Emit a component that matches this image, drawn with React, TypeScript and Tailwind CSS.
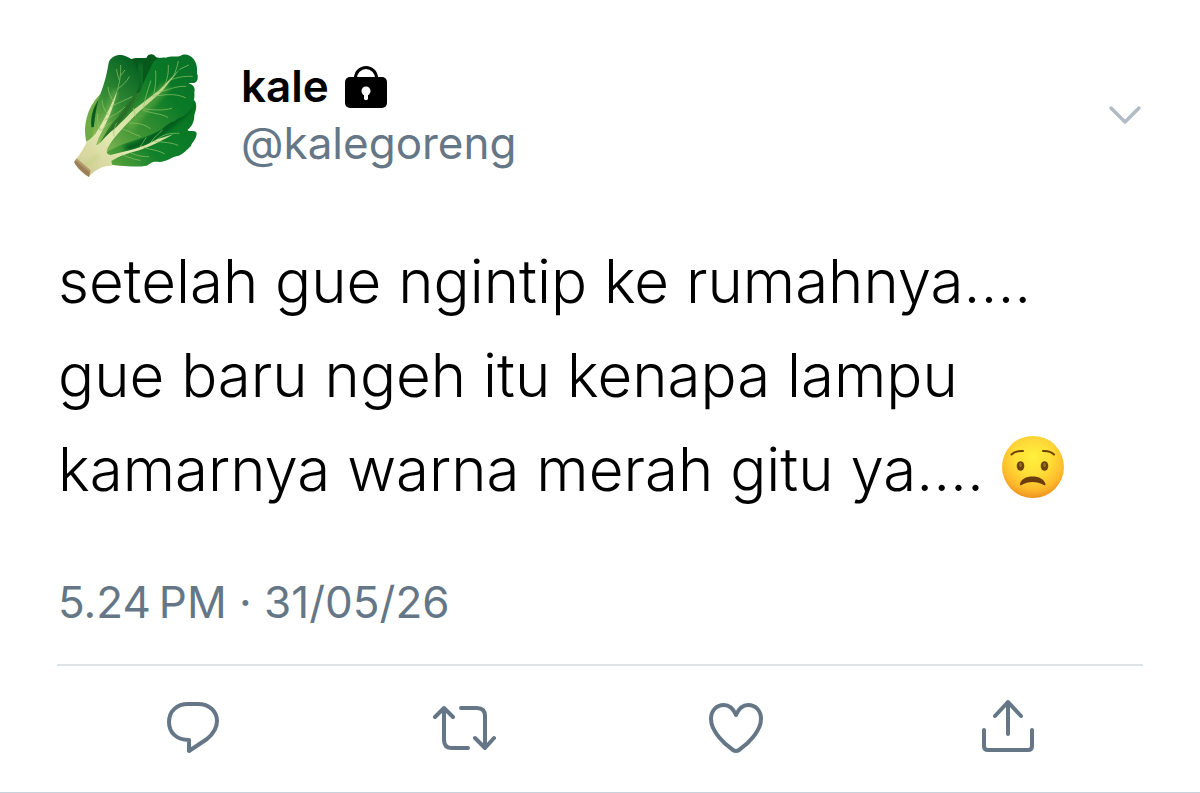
import React from "react";

export default function App() {
  return (
    <main className="bg-white border-b border-[#c8d2da] px-[57px] pt-10 font-['Inter',sans-serif]">
      <article>
        <header className="flex items-start">
          <KaleAvatar />
          <div className="ml-6 mt-[18px] flex-1">
            <div className="flex items-center gap-4">
              <h1 className="text-[44px] leading-[57px] font-semibold text-black">
                kale
              </h1>
              <LockIcon />
            </div>
            <p className="text-[44px] leading-[57px] text-[#657786]">
              @kalegoreng
            </p>
          </div>
          <button type="button" aria-label="More" className="mt-16">
            <svg
              className="w-9 h-6"
              viewBox="0 0 36 24"
              fill="none"
              stroke="#b2bbc3"
              strokeWidth="3.500"
              strokeLinecap="round"
              strokeLinejoin="round"
            >
              <path d="M4 4 L18 18 L32 4" />
            </svg>
          </button>
        </header>

        <p className="mt-11 pl-px text-[60px] leading-[94px] font-light text-black">
          setelah gue ngintip ke rumahnya....
          <br />
          gue baru ngeh itu kenapa lampu
          <br />
          kamarnya warna merah gitu ya.... <WorriedFace />
        </p>

        <p className="mt-14 pl-px text-[44px] leading-[60px] text-[#657786]">
          5.24{"\u202F"}PM · 31/05/26
        </p>
      </article>

      <div className="mt-8 grid grid-cols-4 border-t-2 border-[#e1e4e6] pt-[31px] pb-[31px]">
        <Action label="Reply">
          <path d="M27 7 H37 C48 7 56 14 56 24 C56 32 52 37 46 42 L28 54 V43 C16 43 8 36 8 25 C8 14 16 7 27 7 Z" />
        </Action>
        <Action label="Retweet">
          <path d="M3 20 L12 11 L21 20 M12 11 V43 Q12 51 20 51 H36 M29 11 H45 Q53 11 53 19 V51 M43 41 L53 51 L62 41" />
        </Action>
        <Action label="Like">
          <path d="M32 18 C29 11 25 8 20 8 C12 8 7 14 7 22 C7 34 20 47 29 53 Q32 55 35 53 C44 47 57 34 57 22 C57 14 52 8 44 8 C39 8 35 11 32 18 Z" />
        </Action>
        <Action label="Share">
          <path d="M33 37 V5 M20 19 L33 5 L46 19 M9 33 V49 Q9 53 13 53 H53 Q57 53 57 49 V33" />
        </Action>
      </div>
    </main>
  );
}

function Action({
  label,
  children,
}: {
  label: string;
  children: React.ReactNode;
}) {
  return (
    <button type="button" aria-label={label} className="flex justify-center">
      <svg
        className="w-16 h-16"
        viewBox="0 0 64 64"
        fill="none"
        stroke="#657786"
        strokeWidth="4"
        strokeLinecap="round"
        strokeLinejoin="round"
      >
        {children}
      </svg>
    </button>
  );
}

function LockIcon() {
  return (
    <svg className="w-[42px] h-[42px]" viewBox="0 0 42 42" aria-hidden="true">
      <path
        d="M10.500 15 V12 A10.500 10.500 0 0 1 31.500 12 V15"
        fill="none"
        stroke="#000"
        strokeWidth="3"
      />
      <rect y="11" width="42" height="31" rx="5" fill="#000" />
      <circle cx="21" cy="25" r="4.500" fill="#fff" />
      <path d="M19 26 H23 V33 Q21 35.500 19 33 Z" fill="#fff" />
    </svg>
  );
}

function WorriedFace() {
  return (
    <svg
      className="inline-block w-16 h-16 align-[-8px]"
      viewBox="0 0 64 64"
      role="img"
      aria-label="worried face"
    >
      <defs>
        <radialGradient id="face" cx="50%" cy="34%" r="66%">
          <stop offset="0" stopColor="#fff03c" />
          <stop offset="0.450" stopColor="#ffdd36" />
          <stop offset="0.800" stopColor="#fdb92b" />
          <stop offset="1" stopColor="#ee9220" />
        </radialGradient>
        <linearGradient id="shine" x1="0" y1="0" x2="0" y2="1">
          <stop offset="0" stopColor="#ffc83c" />
          <stop offset="1" stopColor="#ffe83a" stopOpacity="0" />
        </linearGradient>
      </defs>
      <circle cx="32" cy="32" r="31" fill="url(#face)" />
      <ellipse cx="32" cy="11" rx="22" ry="9" fill="url(#shine)" opacity="0.5" />
      <g fill="none" stroke="#6b4208" strokeWidth="2" strokeLinecap="round">
        <path d="M10.500 19.500 Q14.500 15.500 22 16" />
        <path d="M42 16 Q49 15.500 53 19.500" />
      </g>
      <g fill="#6b430d">
        <ellipse cx="19.500" cy="31" rx="3.800" ry="4.800" />
        <ellipse cx="43.500" cy="31" rx="3.800" ry="4.800" />
      </g>
      <g fill="#94651f">
        <ellipse cx="19.500" cy="30" rx="1.700" ry="2.200" />
        <ellipse cx="43.500" cy="30" rx="1.700" ry="2.200" />
      </g>
      <path
        d="M19 49 C20 44 25 41.500 31.500 41.500 C38 41.500 43 44 44.500 49 C44.800 50.500 43.500 50.600 42.800 50 C36 46 27 46 20.500 50 C19.600 50.600 18.700 50.300 19 49 Z"
        fill="#6b3d0c"
      />
    </svg>
  );
}

function KaleAvatar() {
  return (
    <svg
      className="w-40 h-[150px] shrink-0"
      viewBox="21 0 480 450"
      role="img"
      aria-label="kale"
    >
      <defs>
        <linearGradient id="leaf" x1="0" y1="1" x2="1" y2="0">
          <stop offset="0" stopColor="#8cba58" />
          <stop offset="0.300" stopColor="#3f9434" />
          <stop offset="0.650" stopColor="#0a7a26" />
          <stop offset="1" stopColor="#08702a" />
        </linearGradient>
        <linearGradient id="small" x1="0.200" y1="1" x2="0.700" y2="0">
          <stop offset="0" stopColor="#8fbd57" />
          <stop offset="0.450" stopColor="#378f35" />
          <stop offset="1" stopColor="#076323" />
        </linearGradient>
        <linearGradient id="low" x1="0" y1="0.800" x2="1" y2="0.200">
          <stop offset="0" stopColor="#5da53c" />
          <stop offset="0.400" stopColor="#12812b" />
          <stop offset="1" stopColor="#067522" />
        </linearGradient>
        <linearGradient id="stalk" x1="0" y1="1" x2="0.800" y2="0">
          <stop offset="0" stopColor="#cfc890" />
          <stop offset="0.400" stopColor="#e2eab2" />
          <stop offset="1" stopColor="#b4d180" />
        </linearGradient>
        <filter id="soft" x="-20%" y="-20%" width="140%" height="140%">
          <feGaussianBlur stdDeviation="6" />
        </filter>
      </defs>

      {/* outer leaves */}
      <path
        d="M109 305 C98 262 109 205 150 163 L172 205 L145 310 Z"
        fill="#6fac45"
      />
      <path d="M124 262 C120 220 135 190 157 165 L170 205 L140 260 Z" fill="#075c1c" />
      <path
        d="M243 58 C258 50 276 57 290 53 C294 40 312 40 318 52 L330 54 L306 130 L258 220 L235 190 Z"
        fill="#07581b"
      />
      <path d="M268 72 C280 100 276 130 268 165" stroke="#17762a" strokeWidth="14" fill="none" filter="url(#soft)" />

      {/* shaded gap between the leaves */}
      <path d="M140 320 L190 230 L240 165 L290 150 L270 220 L190 320 Z" fill="#3c8a32" />

      {/* lower leaf */}
      <path
        d="M165 340 C210 300 330 250 433 181 C441 190 440 207 433 225 C433 247 425 260 412 270 C422 277 438 268 440 280 C440 298 425 307 423 318 C412 328 400 342 386 347 C366 350 350 365 328 366 C308 362 301 370 291 377 C260 382 215 380 150 368 Z"
        fill="url(#low)"
      />
      <path d="M225 325 C290 310 345 275 418 205" stroke="#04581a" strokeWidth="18" fill="none" filter="url(#soft)" />

      {/* main leaf */}
      <path
        d="M150 345 C175 285 215 240 250 200 C270 155 288 110 303 81 C309 60 325 50 348 53 C362 47 378 52 391 48 C403 39 421 44 430 56 C441 69 442 85 441 100 C447 115 441 130 430 129 L415 129 C430 134 437 143 433 157 C435 176 430 197 417 213 C405 231 385 232 373 244 C350 249 340 270 315 278 C282 295 235 304 208 317 Z"
        fill="url(#leaf)"
      />
      <path d="M235 265 C265 220 320 175 350 135" stroke="#76b64d" strokeWidth="28" opacity="0.45" fill="none" filter="url(#soft)" />
      <path d="M262 140 C250 190 210 235 168 292" stroke="#074f18" strokeWidth="16" opacity="0.6" fill="none" filter="url(#soft)" />

      {/* left leaf */}
      <path
        d="M125 312 C133 265 133 212 151 162 C164 128 171 100 176 68 C184 46 210 40 231 50 C250 56 261 79 265 101 C271 131 266 158 247 178 C226 191 217 215 201 235 C186 249 174 267 145 317 Z"
        fill="url(#small)"
      />
      <path d="M148 275 C167 240 181 200 197 150" stroke="#9bc865" strokeWidth="18" opacity="0.4" fill="none" filter="url(#soft)" />

      {/* stalk and midribs */}
      <path
        d="M73 363 C91 344 101 324 112 302 C122 298 128 290 136 282 C159 247 177 211 202 151 C192 202 166 258 146 294 L137 319 C157 306 166 287 192 268 C218 244 235 225 254 207 L327 151 L389 88 L335 155 L266 216 C229 253 192 290 176 319 C168 333 167 343 181 345 C232 333 277 325 321 298 L370 283 C319 312 277 330 232 341 C209 348 193 357 184 363 L187 377 C160 376 139 386 117 410 Z"
        fill="url(#stalk)"
      />
      <path d="M145 345 C130 365 119 370 100 376" stroke="#a9c96b" strokeWidth="6" opacity="0.6" fill="none" filter="url(#soft)" />
      <path d="M80 355 L122 391 L117 411 C100 401 83 387 73 367 Z" fill="#b49a6b" />
      <path d="M76 361 L119 397 L117 411 C99 399 84 387 73 367 Z" fill="#9b7f59" />

      {/* veins */}
      <g fill="none" stroke="#8fc468" strokeWidth="3" strokeLinecap="round" opacity="0.7">
        <path d="M202 151 C210 125 213 102 212 76" />
        <path d="M203 147 C219 136 229 126 238 110 M208 120 C203 107 201 98 200 88 M213 106 L224 91" />
        <path d="M190 184 C182 171 175 158 174 142 M184 199 C209 187 228 179 246 170" />
        <path d="M174 224 C162 208 156 195 157 182 M165 240 C191 226 211 215 225 201 M150 270 C143 250 141 238 143 223 M151 272 L183 247" />
        <path d="M389 88 L416 75 M370 110 C378 93 381 80 385 64 M358 121 C383 111 403 108 427 109" />
        <path d="M342 139 C353 118 356 96 355 76 M326 155 C353 153 374 137 407 139 M310 170 C316 142 319 119 317 93" />
        <path d="M313 168 C345 165 374 158 406 173 M281 206 C308 210 339 213 365 205 M281 202 C285 170 297 143 302 123" />
        <path d="M280 211 C310 222 333 220 353 232 M256 228 L250 205 M238 249 C267 249 284 253 301 266 M220 268 C240 275 251 282 270 289 M192 288 C188 271 195 261 200 249" />
        <path d="M321 298 C345 279 365 280 387 280 M302 308 C310 291 327 284 337 270 M270 321 C278 309 283 302 288 293" />
        <path d="M312 304 C343 307 364 307 384 316 M281 322 C302 330 326 330 343 341 M240 338 C265 348 276 350 296 350 M218 345 C237 352 253 359 270 361" />
      </g>
    </svg>
  );
}
